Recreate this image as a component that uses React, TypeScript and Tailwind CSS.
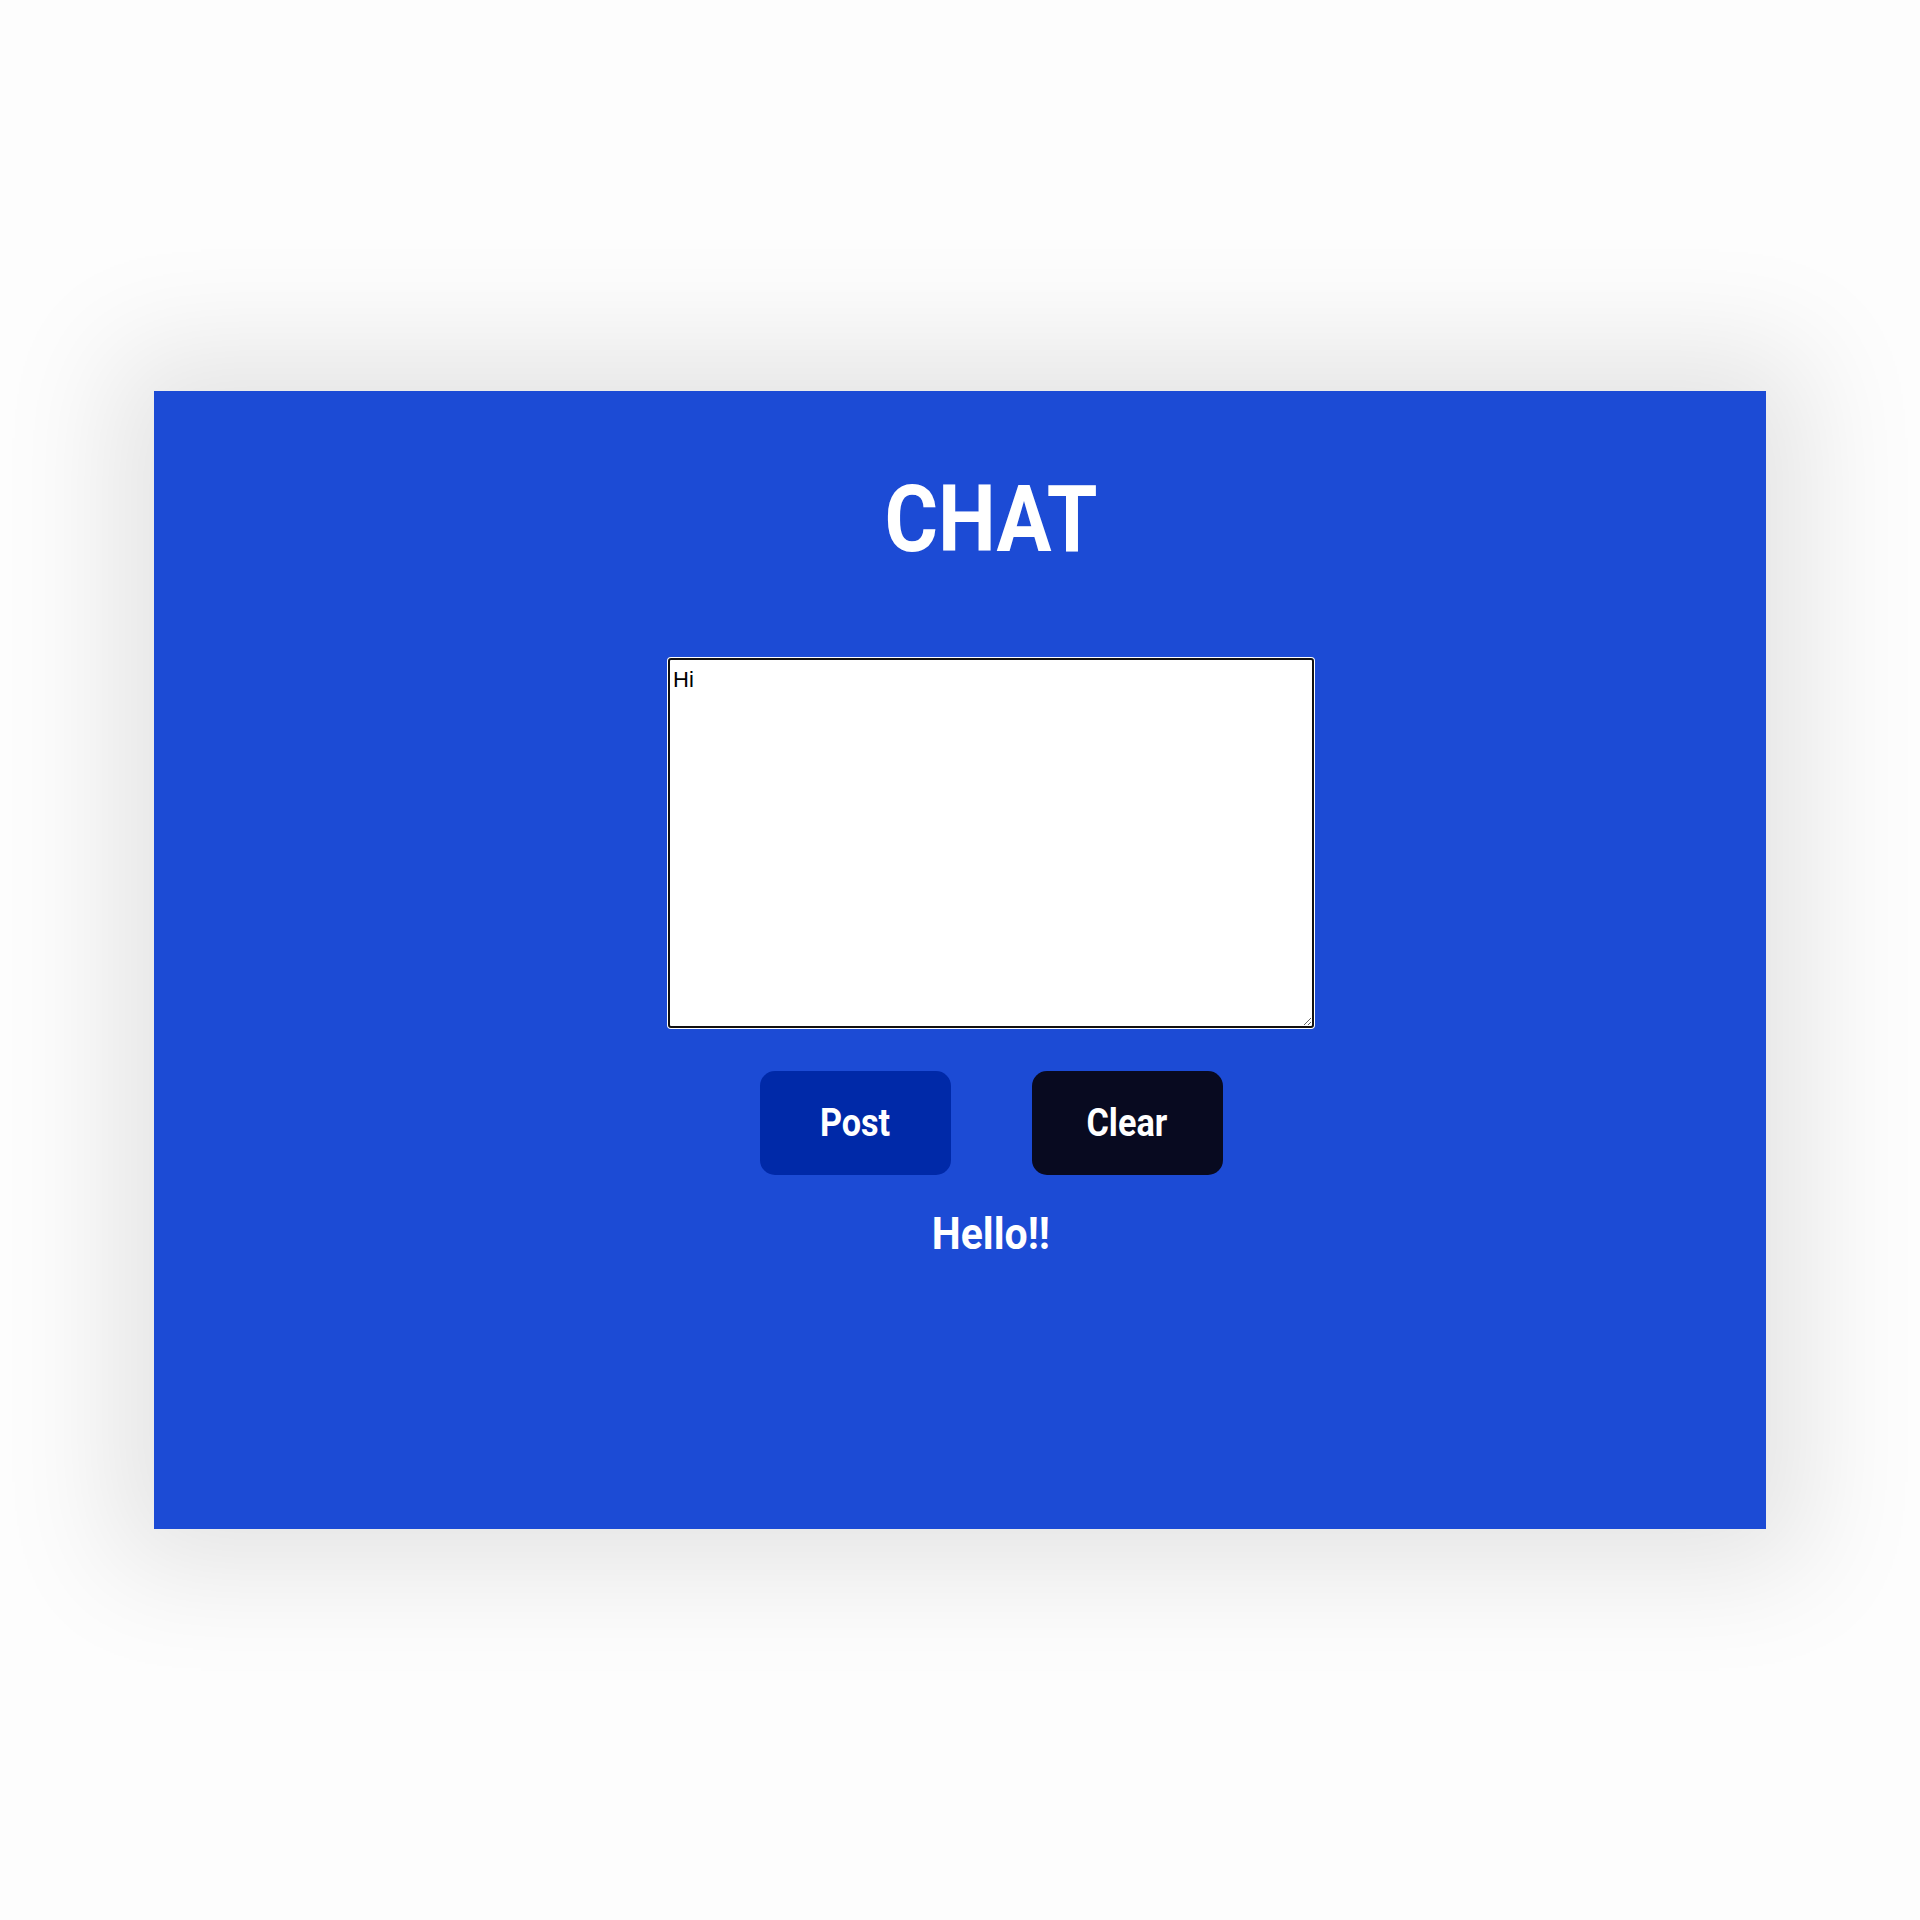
import { useState } from "react";

export default function App() {
  const [text, setText] = useState("Hi");
  const [posted] = useState("Hello!!");

  return (
    <div className="w-full h-[1920px] bg-[#fdfdfd] pt-[391px] px-[154px] font-['Roboto',sans-serif]">
      <div className="h-[1138px] bg-[#1c4bd5] shadow-[0_0_110px_40px_rgba(0,0,0,0.1)] pt-[82px] pl-[62px] flex flex-col items-center">
        <h1 className="text-[93px] leading-none font-bold text-white scale-x-[0.88]">CHAT</h1>

        <textarea
          className="mt-[92px] w-[646px] h-[370px] bg-white border-2 border-[#111] ring-1 ring-white rounded-[3px] pt-[3px] px-[3px] text-[22px] text-black font-['Liberation_Sans',Arial,sans-serif] outline-none"
          value={text}
          onChange={(e) => setText(e.target.value)}
        />

        <div className="mt-[43px] flex gap-[81px]">
          <button className="w-[191px] h-[104px] rounded-[15px] bg-[#0029a8] text-white text-[38px] font-bold">
            <span className="inline-block scale-x-[0.9]">Post</span>
          </button>
          <button className="w-[191px] h-[104px] rounded-[15px] bg-[#080a20] text-white text-[38px] font-bold">
            <span className="inline-block scale-x-[0.9]">Clear</span>
          </button>
        </div>

        <p className="mt-[36px] text-[45px] leading-none font-bold text-white scale-x-[0.91]">{posted}</p>
      </div>
    </div>
  );
}
